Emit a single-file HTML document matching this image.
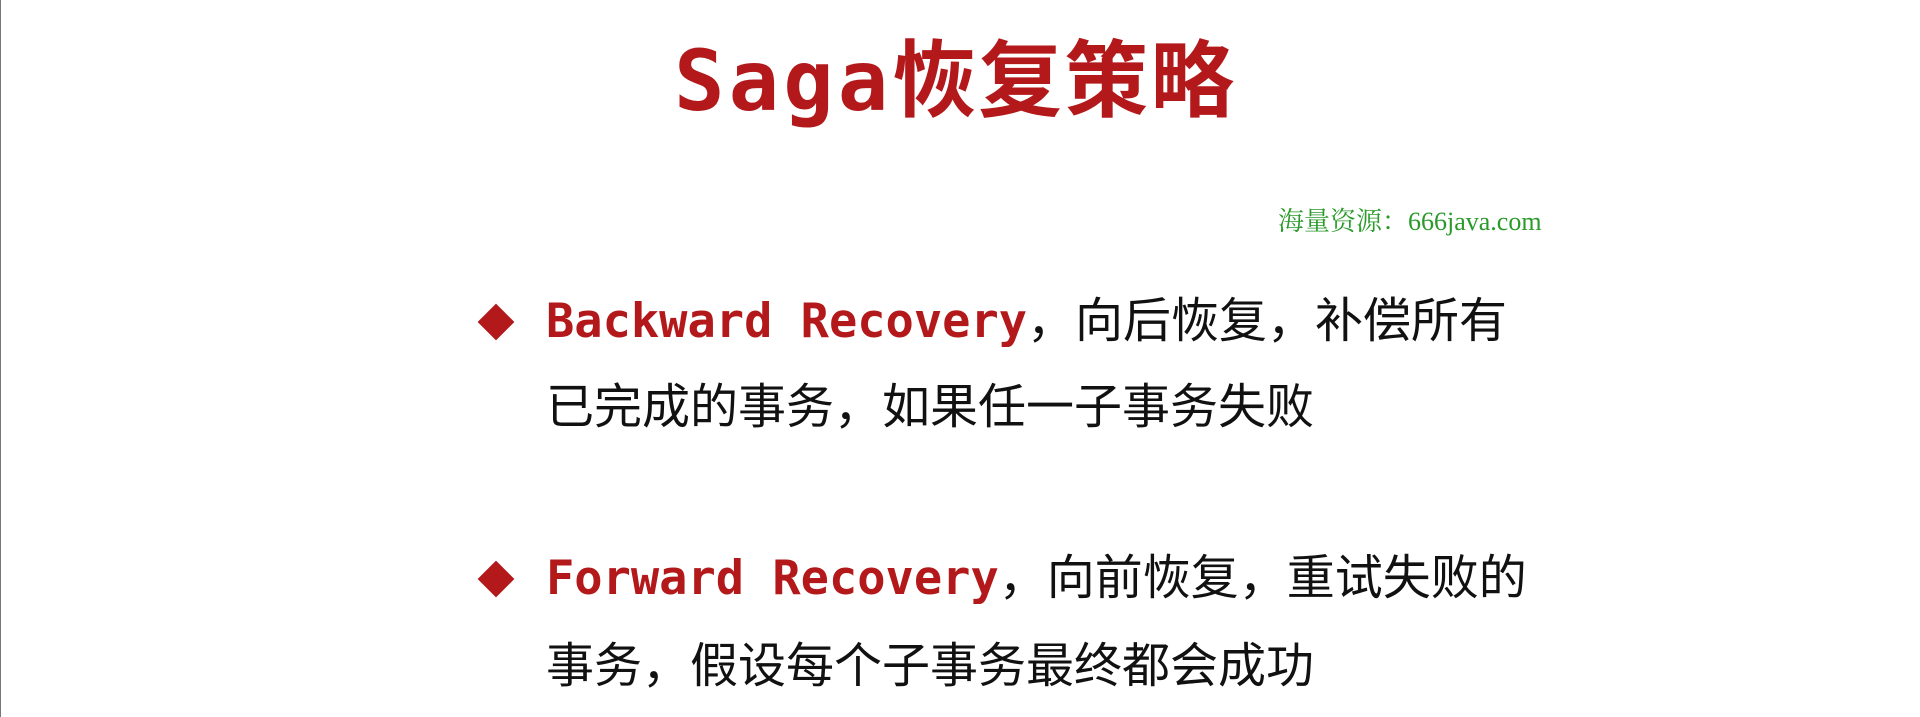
<!DOCTYPE html>
<html><head><meta charset="utf-8"><style>
html,body{margin:0;padding:0;}
body{width:1920px;height:717px;background:#fff;position:relative;overflow:hidden;border-left:1px solid #777;box-sizing:border-box;}
.t{position:absolute;white-space:nowrap;}
.title{left:673px;top:25px;font-size:84px;line-height:100px;font-weight:bold;color:#b3191b;font-family:"DejaVu Sans Mono","Noto Sans CJK SC",monospace;}
.title .en{letter-spacing:4px;}
.title .cn{font-family:"Noto Sans CJK SC",sans-serif;letter-spacing:2px;}
.wm{left:1277px;top:206px;font-size:26px;line-height:32px;color:#2b9a2b;font-family:"Liberation Serif","Noto Serif CJK SC",serif;}
.line{font-size:48px;line-height:60px;color:#111;font-family:"Liberation Sans","Noto Sans CJK SC",sans-serif;left:545px;}
.code{color:#b3191b;font-family:"DejaVu Sans Mono",monospace;font-size:47px;font-weight:bold;}
.dia{position:absolute;width:26px;height:26px;background:#b3191b;transform:rotate(45deg);}
</style></head><body>
<div class="t title"><span class="en">Saga</span><span class="cn">恢复策略</span></div>
<div class="t wm">海量资源：666java.com</div>
<div class="dia" style="left:482px;top:309px"></div>
<div class="t line" style="top:292px"><span class="code">Backward Recovery</span>，向后恢复，补偿所有</div>
<div class="t line" style="top:378px">已完成的事务，如果任一子事务失败</div>
<div class="dia" style="left:482px;top:566px"></div>
<div class="t line" style="top:549px"><span class="code">Forward Recovery</span>，向前恢复，重试失败的</div>
<div class="t line" style="top:637px">事务，假设每个子事务最终都会成功</div>
</body></html>
